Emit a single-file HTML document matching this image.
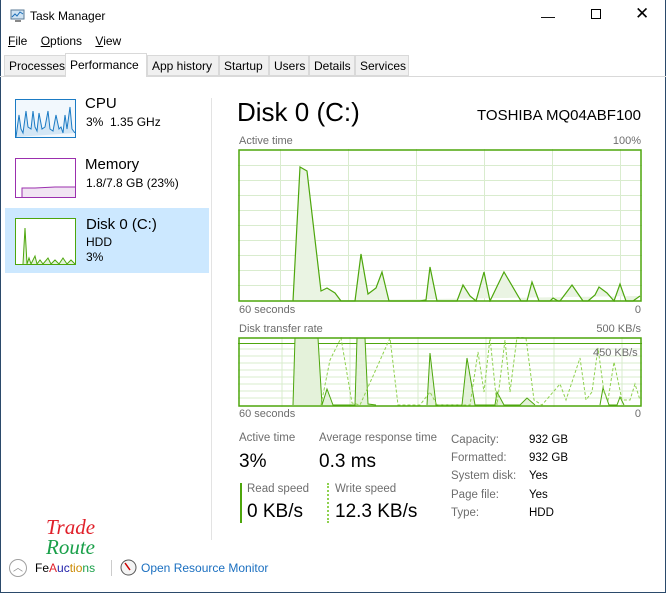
<!DOCTYPE html>
<html><head><style>
*{margin:0;padding:0;box-sizing:border-box}
body{width:672px;height:593px;background:#fff;font-family:"Liberation Sans",sans-serif;position:relative;overflow:hidden;color:#000}
.a{position:absolute;white-space:nowrap}
.g{color:#6d6d6d;font-size:11px}
.tab{position:absolute;top:55px;height:21px;border:1px solid #d9d9d9;background:#f0f0f0;font-size:12px;padding:3px 4px 0 4px}
</style></head><body>
<div class="a" style="left:0;top:0;width:666px;height:593px;border-left:1px solid #2b4a6b;border-right:1px solid #2b4a6b;border-bottom:1px solid #2b4a6b"></div>
<svg class="a" style="left:9px;top:9px" width="16" height="14"><rect x="2" y="1" width="13" height="9" fill="#cfe3f3" stroke="#5a7a95"/><polyline points="3,8 6,5 8,7 11,3 14,5" fill="none" stroke="#1d6fb8"/><rect x="6" y="11" width="6" height="2" fill="#888"/></svg>
<div class="a" style="left:30px;top:9px;font-size:12px">Task Manager</div>
<div class="a" style="left:541px;top:8px;font-size:14px">—</div>
<div class="a" style="left:591px;top:9px;width:10px;height:10px;border:1px solid #000"></div>
<div class="a" style="left:635px;top:4px;font-size:17px">✕</div>
<div class="a" style="left:8px;top:34px;font-size:12px"><u>F</u>ile &nbsp;&nbsp;&nbsp;<u>O</u>ptions &nbsp;&nbsp;&nbsp;<u>V</u>iew</div>
<div class="a" style="left:0;top:76px;width:666px;height:1px;background:#d9d9d9"></div>
<div class="tab" style="left:4px;width:62px">Processes</div>
<div class="tab" style="left:65px;top:53px;height:24px;width:82px;background:#fff;border-bottom:none;padding-top:4px">Performance</div>
<div class="tab" style="left:147px;width:72px">App history</div>
<div class="tab" style="left:219px;width:50px">Startup</div>
<div class="tab" style="left:269px;width:40px">Users</div>
<div class="tab" style="left:309px;width:46px">Details</div>
<div class="tab" style="left:355px;width:54px">Services</div>

<div class="a" style="left:211px;top:98px;width:1px;height:442px;background:#e3e3e3"></div>
<svg class="a" style="left:15px;top:99px" width="61" height="39"><rect x=".5" y=".5" width="60" height="38" fill="#f2f8fd" stroke="#1b7bc4"/><polyline points="1,38 4,16 6,30 8,34 11,12 13,28 16,30 18,12 20,28 22,32 24,14 27,30 30,28 33,12 35,30 38,32 41,16 44,30 46,28 48,34 50,16 52,30 55,8 57,30 60,34" fill="#d3e6f5" stroke="#1b7bc4"/></svg>
<div class="a" style="left:85px;top:95px;font-size:15px">CPU</div>
<div class="a" style="left:86px;top:115px;font-size:12px">3% &nbsp;1.35 GHz</div>
<svg class="a" style="left:15px;top:158px" width="61" height="40"><rect x=".5" y=".5" width="60" height="39" fill="#fff" stroke="#9b2fae"/><polygon points="7,39 7,30 20,30 40,29 60,29 60,39" fill="#f1e5f3"/><polyline points="7,39 7,30 20,30 40,29 60,29" fill="none" stroke="#9b2fae"/></svg>
<div class="a" style="left:85px;top:156px;font-size:15px">Memory</div>
<div class="a" style="left:86px;top:176px;font-size:12px">1.8/7.8 GB (23%)</div>
<div class="a" style="left:5px;top:208px;width:204px;height:65px;background:#cce8ff"></div>
<svg class="a" style="left:15px;top:218px" width="61" height="47"><rect x=".5" y=".5" width="60" height="46" fill="#fff" stroke="#4da60c"/><polyline points="8,46 10,10 12,46 14,40 16,46 20,38 22,46 25,42 28,46 33,40 36,46 40,42 44,46 48,40 52,46 56,42 60,46" fill="#e4f2da" stroke="#4da60c"/></svg>
<div class="a" style="left:86px;top:216px;font-size:15px">Disk 0 (C:)</div>
<div class="a" style="left:86px;top:235px;font-size:12px">HDD</div>
<div class="a" style="left:86px;top:250px;font-size:12px">3%</div>

<div class="a" style="left:237px;top:97px;font-size:26px">Disk 0 (C:)</div>
<div class="a" style="right:31px;top:107px;font-size:15px">TOSHIBA MQ04ABF100</div>
<div class="a g" style="left:239px;top:135px">Active time</div>
<div class="a g" style="right:31px;top:135px">100%</div>
<svg class="a" style="left:238px;top:149px" width="404" height="153">
<g stroke="#d9ecce" stroke-width="1">
<line x1="42.5" y1="0" x2="42.5" y2="152"/><line x1="110.5" y1="0" x2="110.5" y2="152"/><line x1="178.5" y1="0" x2="178.5" y2="152"/><line x1="246.5" y1="0" x2="246.5" y2="152"/><line x1="314.5" y1="0" x2="314.5" y2="152"/><line x1="382.5" y1="0" x2="382.5" y2="152"/>
<line x1="0" y1="16.5" x2="404" y2="16.5"/><line x1="0" y1="31.5" x2="404" y2="31.5"/><line x1="0" y1="46.5" x2="404" y2="46.5"/><line x1="0" y1="61.5" x2="404" y2="61.5"/><line x1="0" y1="76.5" x2="404" y2="76.5"/><line x1="0" y1="91.5" x2="404" y2="91.5"/><line x1="0" y1="106.5" x2="404" y2="106.5"/><line x1="0" y1="121.5" x2="404" y2="121.5"/><line x1="0" y1="136.5" x2="404" y2="136.5"/>
</g>
<g transform="translate(-238,-149)">
<polyline points="293,301 300,167 307,171 321,291 327,288 335,293 341,301 355,301 361,254 368,294 376,288 382,272 389,301 420,301 426,300 430,267 437,301 457,301 463,285 470,296 476,301 484,272 490,301 504,272 521,301 527,301 532,282 539,301 550,301 553,298 558,301 560,301 572,285 583,301 588,301 595,295 599,287 607,293 614,301 620,284 626,301 633,301 640,296" fill="#eaf4e3" stroke="#4da60c" stroke-width="1.2"/>
</g>
<rect x="1" y="1" width="402" height="151" fill="none" stroke="#4da60c" stroke-width="1.5"/>
</svg>
<div class="a g" style="left:239px;top:304px">60 seconds</div>
<div class="a g" style="right:31px;top:304px">0</div>
<div class="a g" style="left:239px;top:323px">Disk transfer rate</div>
<div class="a g" style="right:31px;top:323px">500 KB/s</div>
<svg class="a" style="left:238px;top:337px" width="404" height="70">
<g stroke="#d9ecce"><line x1="0" y1="12" x2="404" y2="12"/><line x1="0" y1="19" x2="404" y2="19"/><line x1="0" y1="26" x2="404" y2="26"/><line x1="0" y1="33" x2="404" y2="33"/><line x1="0" y1="40" x2="404" y2="40"/><line x1="0" y1="47" x2="404" y2="47"/><line x1="0" y1="54" x2="404" y2="54"/><line x1="0" y1="61" x2="404" y2="61"/>
<line x1="44" y1="0" x2="44" y2="70"/><line x1="112" y1="0" x2="112" y2="70"/><line x1="180" y1="0" x2="180" y2="70"/><line x1="248" y1="0" x2="248" y2="70"/><line x1="316" y1="0" x2="316" y2="70"/><line x1="384" y1="0" x2="384" y2="70"/></g>
<line x1="0" y1="6.5" x2="404" y2="6.5" stroke="#4da60c"/>
<g transform="translate(-238,-337)">
<polyline points="293,405 295,338 318,338 322,405 327,389 333,405 355,405 357,338 365,338 368,404 376,405" fill="#e4f2da" stroke="#4da60c"/>
<polyline points="427,405 430,353 436,405 462,405 467,358 475,405 495,405 497,392 504,405 520,405 527,398 535,405" fill="#e4f2da" stroke="#4da60c"/>
<polyline points="600,405 603,388 609,405 617,405 620,397 624,405" fill="none" stroke="#4da60c"/>
<polyline points="321,405 330,360 341,338 352,403 360,405 390,338 398,405 420,405 430,392 437,405 470,405 478,352 484,392 490,338 497,405 505,340 510,392 517,337 526,338 534,400 542,405 560,384 566,400 572,382 580,358 586,400 592,392 598,348 604,392 608,400 614,362 622,400 630,400 635,384 640,400" fill="none" stroke="#8fd14f" stroke-dasharray="3,2"/>
</g>
<rect x="1" y="1" width="402" height="68" fill="none" stroke="#4da60c" stroke-width="1.5"/>
</svg>
<div class="a" style="left:593px;top:347px;font-size:11px;color:#6d6d6d">450 KB/s</div>
<div class="a g" style="left:239px;top:408px">60 seconds</div>
<div class="a g" style="right:31px;top:408px">0</div>

<div class="a g" style="left:239px;top:432px;font-size:11.5px">Active time</div>
<div class="a" style="left:239px;top:451px;font-size:19px">3%</div>
<div class="a g" style="left:319px;top:432px;font-size:11.5px">Average response time</div>
<div class="a" style="left:319px;top:451px;font-size:19px">0.3 ms</div>
<div class="a" style="left:240px;top:483px;width:2px;height:40px;background:#4da60c"></div>
<div class="a g" style="left:247px;top:483px;font-size:11.5px">Read speed</div>
<div class="a" style="left:247px;top:501px;font-size:19px">0 KB/s</div>
<div class="a" style="left:327px;top:483px;width:2px;height:40px;border-left:2px dotted #8fd14f"></div>
<div class="a g" style="left:335px;top:483px;font-size:11.5px">Write speed</div>
<div class="a" style="left:335px;top:501px;font-size:19px">12.3 KB/s</div>
<div class="a g" style="left:451px;top:431px;font-size:11.5px;line-height:18.2px">Capacity:<br>Formatted:<br>System disk:<br>Page file:<br>Type:</div>
<div class="a" style="left:529px;top:431px;font-size:11.5px;line-height:18.2px">932 GB<br>932 GB<br>Yes<br>Yes<br>HDD</div>

<div class="a" style="left:46px;top:515px;font-family:'Liberation Serif',serif;font-style:italic;font-size:21px;color:#e0202a">Trade</div>
<div class="a" style="left:46px;top:535px;font-family:'Liberation Serif',serif;font-style:italic;font-size:21px;color:#1aa04a">Route</div>
<div class="a" style="left:9px;top:559px;width:18px;height:18px;border:1px solid #a0a0a0;border-radius:50%;font-size:10px;color:#888;text-align:center;line-height:17px">︿</div>
<div class="a" style="left:35px;top:561px;font-size:12px">Fe<span style="color:#e0202a">A</span><span style="color:#22a">uc</span><span style="color:#cc8a00">tio</span><span style="color:#1aa04a">ns</span></div>
<div class="a" style="left:111px;top:560px;width:1px;height:16px;background:#ccc"></div>
<svg class="a" style="left:120px;top:559px" width="17" height="17"><circle cx="8.5" cy="8.5" r="7.5" fill="#f4f4f4" stroke="#555"/><line x1="5" y1="4" x2="10" y2="11" stroke="#c00" stroke-width="1.5"/></svg>
<div class="a" style="left:141px;top:561px;font-size:12px;color:#1a6fc0">Open Resource Monitor</div>
</body></html>
